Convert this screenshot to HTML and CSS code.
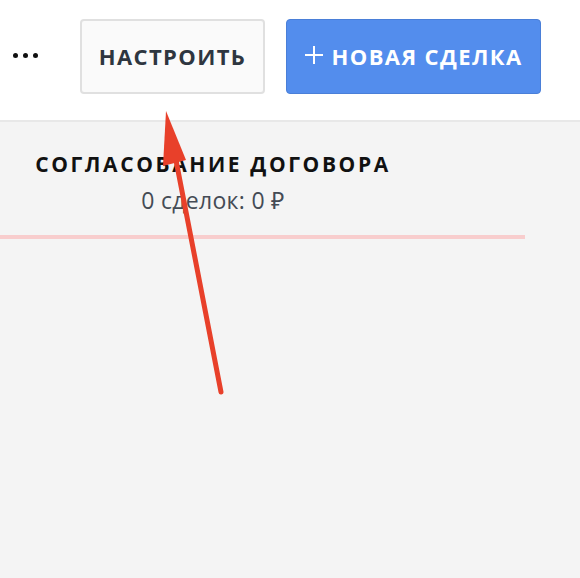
FILE: index.html
```html
<!doctype html>
<html lang="ru">
<head>
	<meta charset="UTF-8">
	<title>Сделки</title>
	<link rel="stylesheet" href="styles.css">
</head>
<body>
	<header class="topbar">
		<span class="more"><i></i><i></i><i></i></span>
		<button class="btn btn-settings">НАСТРОИТЬ</button>
		<button class="btn btn-new">
			<svg class="plus" width="18" height="18" viewBox="0 0 18 18"><path d="M9 0v18M0 9h18" stroke="#fff" stroke-width="2"/></svg>
			НОВАЯ СДЕЛКА
		</button>
	</header>

	<main class="board">
		<section class="column">
			<h2 class="column-title">СОГЛАСОВАНИЕ ДОГОВОРА</h2>
			<p class="column-sum">0 сделок: 0 ₽</p>
			<div class="column-line"></div>
		</section>
	</main>

	<svg class="arrow" width="580" height="578" viewBox="0 0 580 578">
		<line x1="221" y1="392" x2="174" y2="150" stroke="#e8402a" stroke-width="5" stroke-linecap="round"/>
		<polygon points="166,111 163,166 186,160" fill="#e8402a"/>
	</svg>
</body>
</html>
```

FILE: styles.css
```css
body {
	margin: 0;
	width: 580px;
	height: 578px;
	overflow: hidden;
	background: #f4f4f4;
	font-family: "Open Sans", "Noto Sans", sans-serif;
	position: relative;
}

.topbar {
	height: 120px;
	background: #fff;
	border-bottom: 2px solid #e8e8e8;
	display: flex;
	align-items: center;
	padding-left: 13px;
	box-sizing: content-box;
}

.more { display: flex; gap: 5px; width: 67px; margin-top: -10px; }
.more i { width: 5px; height: 5px; border-radius: 50%; background: #111; }

.btn {
	height: 75px;
	margin-top: -8px;
	border-radius: 4px;
	font-family: inherit;
	font-weight: 700;
	font-size: 22px;
	letter-spacing: 1.4px;
	padding: 0;
	cursor: pointer;
}
.btn-settings { width: 185px; background: #fafafa; border: 2px solid #e0e0e0; color: #2e3640; }
.btn-new { width: 255px; margin-left: 21px; background: #538ded; border: 1px solid #4a7fd8; color: #fff; display: flex; align-items: center; justify-content: center; gap: 9px; }
.plus { margin-top: -2px; }

.board { padding-top: 29px; }
.column { width: 525px; }
.column-title {
	margin: 0 0 0 34px;
	width: 358px;
	text-align: center;
	font-size: 21px;
	font-weight: 700;
	letter-spacing: 2.6px;
	color: #111;
	line-height: 26px;
	white-space: nowrap;
}
.column-sum {
	margin: 10px 0 0 34px;
	width: 358px;
	text-align: center;
	font-size: 23px;
	letter-spacing: 0.3px;
	color: #444b55;
	line-height: 26px;
}
.column-line { height: 4px; background: #f8cdcd; margin-top: 22px; }

.arrow { position: absolute; left: 0; top: 0; pointer-events: none; }
```
